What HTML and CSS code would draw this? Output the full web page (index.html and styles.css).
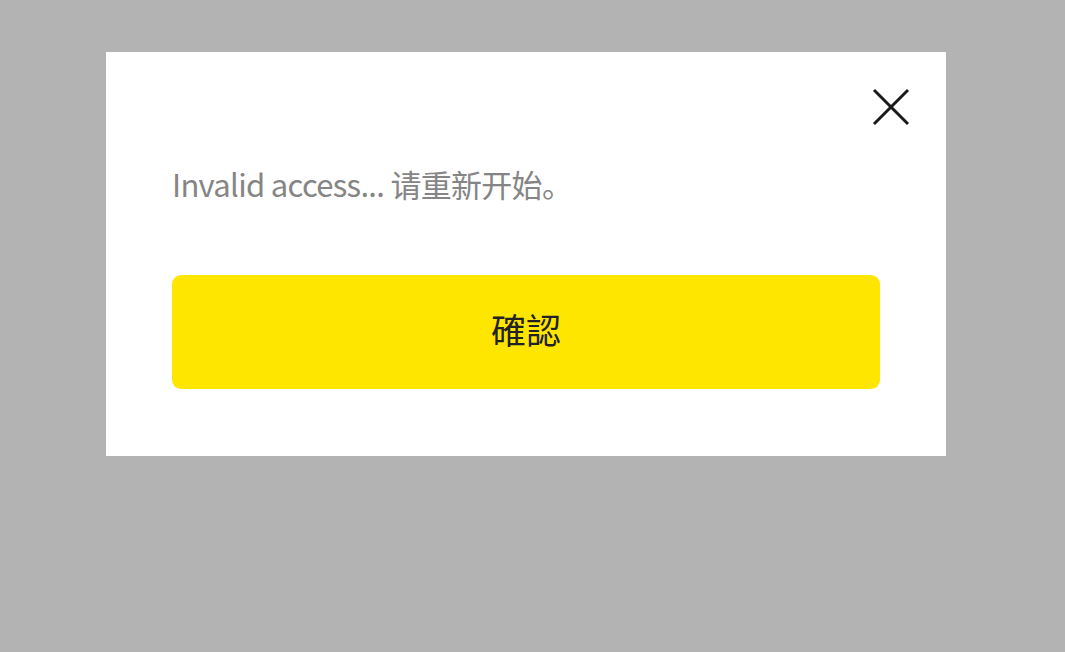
FILE: index.html
```html
<!DOCTYPE html>
<html lang="zh">
<head>
<meta charset="utf-8">
<link rel="stylesheet" href="styles.css">
</head>
<body>
<div class="dialog">
  <button class="close" aria-label="close">
    <svg width="38" height="38" viewBox="0 0 38 38"><path d="M2 2 L36 36 M36 2 L2 36" stroke="#1a1a1a" stroke-width="3" fill="none"/></svg>
  </button>
  <p class="msg">Invalid access... 请重新开始。</p>
  <button class="confirm">確認</button>
</div>
</body>
</html>
```
FILE: styles.css
```css
html, body { margin: 0; padding: 0; }
body {
  background: #b3b3b3;
  width: 1065px;
  height: 652px;
  font-family: "Noto Sans CJK SC", "Noto Sans CJK TC", sans-serif;
}
.dialog {
  position: relative;
  box-sizing: border-box;
  margin: 52px 0 0 106px;
  width: 840px;
  height: 404px;
  background: #fff;
  padding: 108px 66px 0 66px;
}
.close {
  position: absolute;
  top: 36px;
  right: 36px;
  width: 38px;
  height: 38px;
  padding: 0;
  border: 0;
  background: none;
  display: flex;
}
.msg {
  margin: 0;
  font-size: 31px;
  line-height: 48px;
  color: #858585;
  letter-spacing: -0.7px;
}
.confirm {
  display: block;
  margin-top: 67px;
  width: 708px;
  height: 114px;
  border: 0;
  border-radius: 9px;
  background: #ffe600;
  color: #222;
  font-family: "Noto Sans CJK TC", "Noto Sans CJK SC", sans-serif;
  font-size: 35px;
  padding: 0 0 7px 0;
}
```
